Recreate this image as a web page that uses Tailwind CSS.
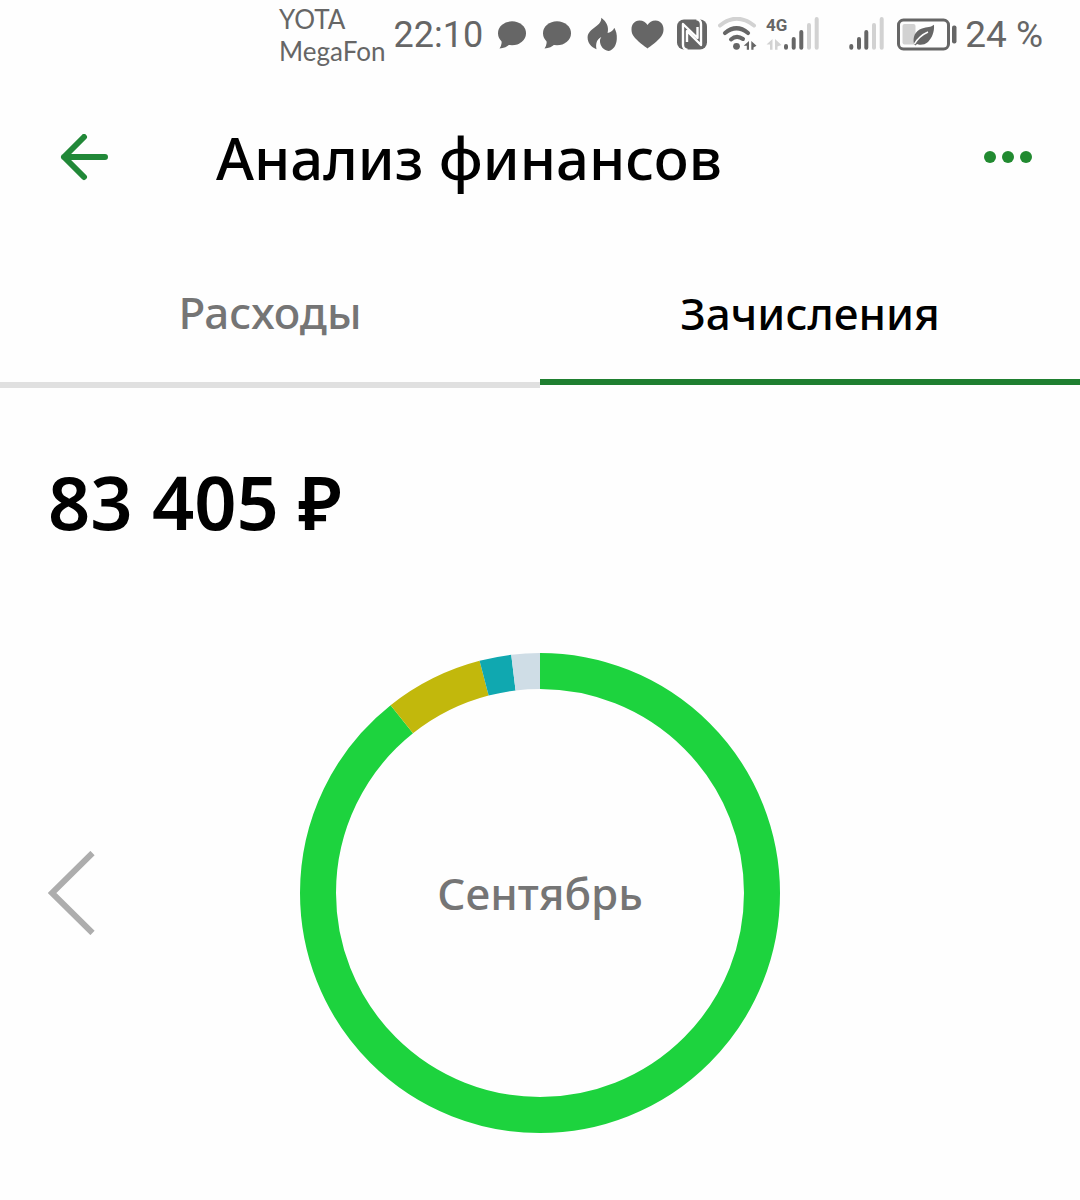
<!DOCTYPE html>
<html lang="ru">
<head>
    <meta charset="UTF-8">
    <meta name="viewport" content="width=device-width, initial-scale=1.0">
    <title>Анализ финансов</title>
    <script src="https://cdn.jsdelivr.net/npm/@tailwindcss/browser@4"></script>
</head>
<body class="bg-[#fefefe] min-h-screen text-black font-['Noto_Sans',sans-serif]">

    <!-- Status bar -->
    <div class="flex items-center justify-end h-[70px] pr-[37px] text-[#666]">
        <div class="mr-2 font-['Lato',sans-serif] text-[26px] leading-8">
            <p>YOTA</p>
            <p>MegaFon</p>
        </div>
        <span class="mr-3 font-['Roboto',sans-serif] text-[36px]">22:10</span>

        <div class="flex gap-[11px] mr-[9px]">
            <svg class="w-[34px] h-9" viewBox="0 0 34 36" fill="currentColor"><ellipse cx="17" cy="16.3" rx="14" ry="12"/><path d="M6 20Q8 27 4.5 31.5Q11 31 15 27Z"/></svg>
            <svg class="w-[34px] h-9" viewBox="0 0 34 36" fill="currentColor"><ellipse cx="17" cy="16.3" rx="14" ry="12"/><path d="M6 20Q8 27 4.5 31.5Q11 31 15 27Z"/></svg>
            <svg class="w-[34px] h-9" viewBox="0 0 34 36" fill="currentColor"><path d="M16.3 .7C22 5 24 10 22.6 16C26 15.5 28.5 13 29.3 10.7C31 14 32.2 17 31.8 22C31.5 28 28.5 33 23.7 34C18 33 15.5 29 15 25C14.8 23 15.3 21.5 16.3 20C11.5 22.5 10.5 27 11.5 32.3C6 30 2.6 26 2.6 20.5C2.8 11 16.5 10 16.3 .7Z"/></svg>
            <svg class="w-[34px] h-9" viewBox="0 0 34 36" fill="currentColor"><path d="M17.5 31.5C15 29.5 7 24 3.5 19C-.5 13 1.5 3.8 9.5 3.6C13 3.6 16 5.5 17.5 8C19 5.5 22 3.6 25.5 3.6C33.5 3.8 35.5 13 31.5 19C28 24 20 29.5 17.5 31.5Z"/></svg>
            <svg class="w-[34px] h-9" viewBox="0 0 34 36" fill="none">
                <rect x="2" y="2.5" width="30" height="30" rx="7" fill="currentColor"/>
                <path d="M12.500 33Q8 32 8 28V7L22.500 21V10M21.500 2Q26 3 26 7V28L12 14V25" stroke="#fefefe" stroke-width="2.4" stroke-linejoin="round"/>
            </svg>
        </div>

        <!-- Wi-Fi -->
        <svg class="w-10 h-9 mr-2" viewBox="0 0 40 36" fill="none" stroke-linecap="round">
            <path d="M2 8.5Q18.5-5 36 8.5" stroke="#d2d2d2" stroke-width="4"/>
            <path d="M7 16Q18.500 6.5 30 16" stroke="currentColor" stroke-width="4.2"/>
            <path d="M13 22.5Q18.500 17.5 25 22" stroke="currentColor" stroke-width="4"/>
            <circle cx="18.5" cy="29.3" r="3.4" fill="currentColor"/>
            <path d="M31 24V32.7H28.8V28.8H25.7ZM33.3 24L38.5 28.8L35.5 30.5V32.7H33.3Z" fill="currentColor"/>
        </svg>

        <!-- Mobile signal, first SIM -->
        <svg class="w-[53px] h-9 mr-[30px] overflow-visible" viewBox="0 0 53 36" fill="none" stroke="currentColor" stroke-width="4" stroke-linecap="round">
            <text x="0" y="14" fill="currentColor" stroke="none" font-family="Roboto, sans-serif" font-size="17" font-weight="700">4G</text>
            <path d="M6.5 22V32.7H4V27.5H.5ZM9 22L15.5 28L11.5 29.5V32.7H9Z" fill="#d2d2d2" stroke="none"/>
            <path d="M20 29V30.7M27.7 22V30.7M35.3 15V30.7"/>
            <path d="M43 8V30.7M50.7 2V30.7" stroke="#d2d2d2"/>
        </svg>

        <!-- Mobile signal, second SIM -->
        <svg class="w-[35px] h-9 mr-[13px]" viewBox="0 0 35 36" fill="none" stroke="currentColor" stroke-width="4" stroke-linecap="round">
            <path d="M2.3 29V30.7M10 22V30.7M17.3 15V30.7"/>
            <path d="M25 8V30.7M32.7 2V30.7" stroke="#d2d2d2"/>
        </svg>

        <!-- Battery -->
        <svg class="w-[60px] h-9 mr-2" viewBox="0 0 60 36" fill="none">
            <rect x="1.5" y="3" width="50" height="29" rx="5" stroke="currentColor" stroke-width="3"/>
            <rect x="5.5" y="7" width="13" height="20.5" rx="2" fill="#d2d2d2"/>
            <rect x="55" y="8.5" width="4.500" height="18" rx="2" fill="currentColor"/>
            <path d="M17 27C15.5 20 18 14 25 11.5C30 9.800 34 10.5 37 7.800C37.5 15 35 21 31 25C27 28.5 22 28 20 27L18.5 28.5Z" fill="currentColor"/>
            <path d="M17.5 27Q22 19 31 15" stroke="#fefefe" stroke-width="1.5"/>
        </svg>
        <span class="font-['Roboto',sans-serif] text-[37px]">24 %</span>
    </div>

    <!-- Header -->
    <header class="flex items-center h-44 px-12">
        <button class="w-[72px] h-[72px] flex items-center justify-center" aria-label="Назад">
            <svg class="w-12 h-12" viewBox="0 0 48 48" fill="none" stroke="#218838" stroke-width="6" stroke-linecap="round" stroke-linejoin="round"><path d="M24 3L4 23L24 43M4 23H45"/></svg>
        </button>
        <h1 class="flex-1 ml-24 text-[58px] leading-[72px] font-medium">Анализ финансов</h1>
        <button class="w-12 h-12" aria-label="Меню">
            <svg viewBox="0 0 48 48" fill="#218a30"><circle cx="6" cy="23" r="6"/><circle cx="24" cy="23" r="6"/><circle cx="42" cy="23" r="6"/></svg>
        </button>
    </header>

    <!-- Tabs -->
    <nav class="grid grid-cols-2 h-[142px] text-[44px] font-medium">
        <button class="border-b-6 border-[#e0e0e0] pb-1 text-[#757575]">Расходы</button>
        <button class="border-b-6 border-[#1f7f30] mb-[3px]">Зачисления</button>
    </nav>

    <main>
        <p class="pt-[66px] pl-12 text-[74px] leading-[96px] font-semibold">83 405 ₽</p>

        <div class="grid grid-cols-[1fr_480px_1fr] items-center mt-[103px]">
            <button class="ml-12 w-12" aria-label="Предыдущий месяц">
                <svg class="w-12 h-[84px]" viewBox="0 0 48 84" fill="none" stroke="#adadad" stroke-width="6"><path d="M44.500 2L4 42L44.500 82"/></svg>
            </button>
            <div class="grid place-items-center">
                <svg class="col-start-1 row-start-1 w-full" viewBox="0 0 480 480" fill="none" stroke-width="36">
                    <g transform="rotate(-90 240 240)">
                        <circle cx="240" cy="240" r="222" pathLength="360" stroke="#1dd33e" stroke-dasharray="321.5 360"/>
                        <circle cx="240" cy="240" r="222" pathLength="360" stroke="#c2b80c" stroke-dasharray="23.9 360" stroke-dashoffset="-321.5"/>
                        <circle cx="240" cy="240" r="222" pathLength="360" stroke="#10a8b0" stroke-dasharray="7.7 360" stroke-dashoffset="-345.4"/>
                        <circle cx="240" cy="240" r="222" pathLength="360" stroke="#cfdde6" stroke-dasharray="6.9 360" stroke-dashoffset="-353.1"/>
                    </g>
                </svg>
                <span class="col-start-1 row-start-1 text-[44px] font-medium text-[#757575]">Сентябрь</span>
            </div>
        </div>
    </main>
</body>
</html>
